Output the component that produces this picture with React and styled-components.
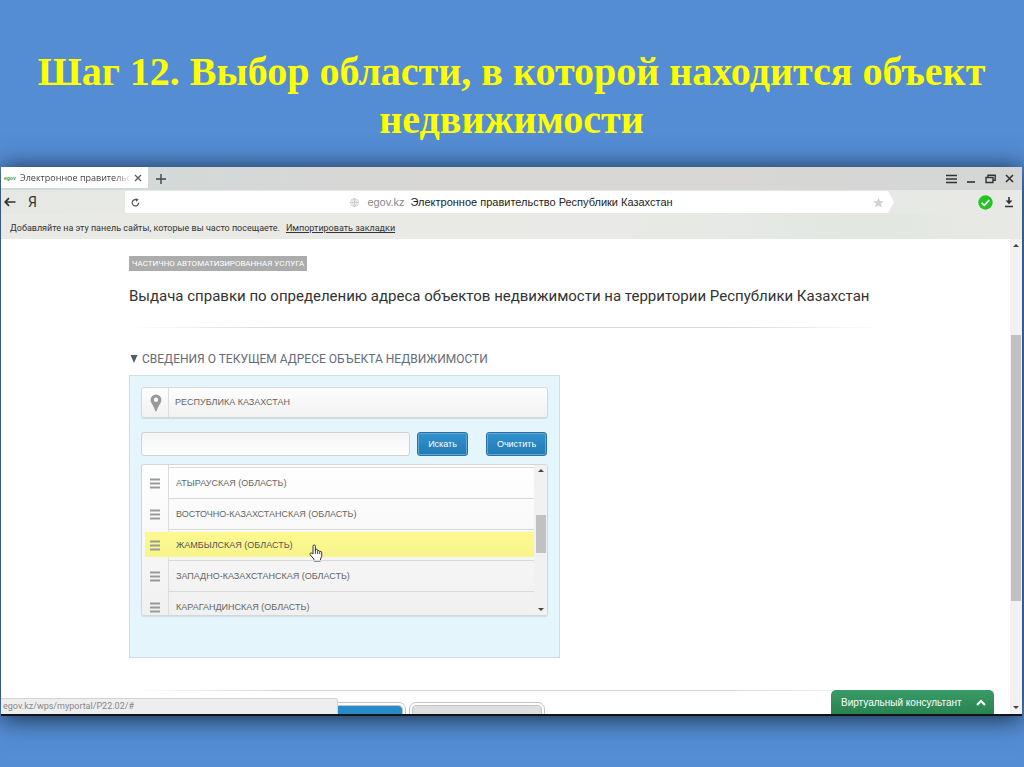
import React from "react";
import styled, { createGlobalStyle, css } from "styled-components";

const regions = [
  { name: "АТЫРАУСКАЯ (ОБЛАСТЬ)" },
  { name: "ВОСТОЧНО-КАЗАХСТАНСКАЯ (ОБЛАСТЬ)" },
  { name: "ЖАМБЫЛСКАЯ (ОБЛАСТЬ)", active: true },
  { name: "ЗАПАДНО-КАЗАХСТАНСКАЯ (ОБЛАСТЬ)" },
  { name: "КАРАГАНДИНСКАЯ (ОБЛАСТЬ)" },
];

const Scrollbar = ({ before, thumb, after, wide }) => (
  <ScrollTrack $wide={wide}>
    <ArrowUp />
    <ScrollGap $grow={before} />
    <ScrollThumb $grow={thumb} />
    <ScrollGap $grow={after} />
    <ArrowDown />
  </ScrollTrack>
);

const HandCursor = () => (
  <CursorIcon viewBox="0 0 14 18" width="14" height="18" aria-hidden="true">
    <path
      d="M4 10V2.2a1.2 1.2 0 0 1 2.4 0V7V6.2a1.1 1.1 0 0 1 2.2 0.3V7.2a1.1 1.1 0 0 1 2.1 0.4V8.2a1 1 0 0 1 2 0.4V12.5L11.5 15V17H5V15.2L1 10.6a1.2 1.2 0 0 1 1.7-1.5Z"
      fill="#fff"
      stroke="#333"
      strokeWidth="1"
      strokeLinejoin="round"
    />
    <path d="M6.4 7v3M8.6 7.2V10M10.7 8.2V10" stroke="#333" strokeWidth="0.9" />
  </CursorIcon>
);

const TabStrip = () => (
  <Tabs>
    <Tab>
      <Favicon>egov</Favicon>
      <TabTitle>Электронное правительс</TabTitle>
      <IconButton aria-label="Закрыть вкладку">
        <svg width="8" height="8" viewBox="0 0 8 8">
          <path d="M1 1l6 6M7 1L1 7" stroke="#555" strokeWidth="1.2" />
        </svg>
      </IconButton>
    </Tab>
    <IconButton aria-label="Новая вкладка">
      <svg width="10" height="10" viewBox="0 0 10 10">
        <path d="M5 0v10M0 5h10" stroke="#444" strokeWidth="1.4" />
      </svg>
    </IconButton>
    <WindowButtons>
      <IconButton aria-label="Меню">
        <svg width="11" height="10" viewBox="0 0 11 10">
          <path d="M0 1.5h11M0 5h11M0 8.5h11" stroke="#333" strokeWidth="1.5" />
        </svg>
      </IconButton>
      <IconButton aria-label="Свернуть">
        <svg width="10" height="10" viewBox="0 0 10 10">
          <path d="M1 8h8" stroke="#333" strokeWidth="1.6" />
        </svg>
      </IconButton>
      <IconButton aria-label="Развернуть">
        <svg width="11" height="10" viewBox="0 0 11 10">
          <path
            d="M1 3.5h7v5H1zM3 3.5V1.3h7.2v5H8"
            fill="none"
            stroke="#333"
            strokeWidth="1.4"
          />
        </svg>
      </IconButton>
      <IconButton aria-label="Закрыть">
        <svg width="9" height="9" viewBox="0 0 9 9">
          <path d="M1 1l7 7M8 1L1 8" stroke="#333" strokeWidth="1.6" />
        </svg>
      </IconButton>
    </WindowButtons>
  </Tabs>
);

const Toolbar = () => (
  <ToolbarRow>
    <NavButtons>
      <IconButton aria-label="Назад">
        <svg width="12" height="10" viewBox="0 0 12 10">
          <path
            d="M11.5 5H1.5M5 1.2L1.2 5L5 8.8"
            fill="none"
            stroke="#333"
            strokeWidth="1.7"
          />
        </svg>
      </IconButton>
      <YandexButton>Я</YandexButton>
    </NavButtons>
    <AddressBar>
      <IconButton aria-label="Обновить">
        <svg width="9" height="9" viewBox="0 0 9 9">
          <path
            d="M7.6 4.8A3.2 3.2 0 1 1 5.6 1.8"
            fill="none"
            stroke="#555"
            strokeWidth="1.2"
          />
          <path d="M4.6 0l3.2 1.8l-2.8 2z" fill="#555" />
        </svg>
      </IconButton>
      <Address>
        <svg width="9" height="9" viewBox="0 0 9 9">
          <path
            d="M4.5 0.5a4 4 0 1 0 0 8a4 4 0 1 0 0-8M4.5 0.5c-2.4 2.4-2.4 5.6 0 8c2.4-2.4 2.4-5.6 0-8M0.5 4.5h8M4.5 0.5v8"
            fill="none"
            stroke="#c4c4c4"
            strokeWidth="0.8"
          />
        </svg>
        <Host>egov.kz</Host>
        <span>Электронное правительство Республики Казахстан</span>
      </Address>
      <IconButton aria-label="В закладки">
        <svg width="11" height="11" viewBox="0 0 11 11">
          <path
            d="M5.5 0.5l1.5 3.5l3.8 0.3l-2.9 2.5l0.9 3.7l-3.3-2l-3.3 2l0.9-3.7l-2.9-2.5l3.8-0.3z"
            fill="#d3d3d3"
          />
        </svg>
      </IconButton>
    </AddressBar>
    <ToolbarEnd>
      <IconButton aria-label="Защита включена">
        <svg width="15" height="15" viewBox="0 0 15 15">
          <circle cx="7.5" cy="7.5" r="7.2" fill="#22c322" />
          <path
            d="M3.6 7.8l2.7 2.5l5-5.2"
            fill="none"
            stroke="#fff"
            strokeWidth="1.8"
          />
        </svg>
      </IconButton>
      <IconButton aria-label="Загрузки">
        <svg width="10" height="12" viewBox="0 0 10 12">
          <path d="M5 1v5M1 10.5h8" stroke="#333" strokeWidth="1.6" />
          <path d="M1.6 4.5h6.8L5 8.2z" fill="#333" />
        </svg>
      </IconButton>
    </ToolbarEnd>
  </ToolbarRow>
);

const RegionPicker = () => (
  <Panel>
    <CurrentRegion>
      <PinCell>
        <svg width="12" height="18" viewBox="0 0 12 18">
          <path
            d="M6 0.5a5.4 5.4 0 0 0-5.4 5.4C0.6 9.5 4.5 12 5.3 17.3h1.4C7.5 12 11.4 9.5 11.4 5.9A5.4 5.4 0 0 0 6 0.5zM6 3.5a2.2 2.2 0 1 1 0 4.4a2.2 2.2 0 1 1 0-4.4z"
            fill="#999"
            fillRule="evenodd"
          />
        </svg>
      </PinCell>
      <CurrentName>РЕСПУБЛИКА КАЗАХСТАН</CurrentName>
    </CurrentRegion>
    <SearchRow>
      <SearchInput type="text" aria-label="Поиск адреса" />
      <BlueButton>Искать</BlueButton>
      <BlueButton $last>Очистить</BlueButton>
    </SearchRow>
    <ListBox>
      <List>
        {regions.map((region) => (
          <Row key={region.name}>
            <RowButton $active={region.active}>
              <RowIcon>
                <svg width="10" height="11" viewBox="0 0 10 11">
                  <path
                    d="M0 1.5h10M0 5.5h10M0 9.5h10"
                    stroke="#999"
                    strokeWidth="1.8"
                  />
                </svg>
              </RowIcon>
              <RowName>{region.name}</RowName>
            </RowButton>
            {region.active && <HandCursor />}
          </Row>
        ))}
      </List>
      <Scrollbar before={38} thumb={38} after={50} />
    </ListBox>
  </Panel>
);

const App = () => (
  <Slide>
    <GlobalStyle />
    <Title>Шаг 12. Выбор области, в которой находится объект недвижимости</Title>
    <BrowserWindow>
      <TabStrip />
      <Toolbar />
      <BookmarksBar>
        <span>Добавляйте на эту панель сайты, которые вы часто посещаете.</span>
        <a href="#import">Импортировать закладки</a>
      </BookmarksBar>
      <Viewport>
        <Page>
          <Badge>ЧАСТИЧНО АВТОМАТИЗИРОВАННАЯ УСЛУГА</Badge>
          <ServiceName>
            Выдача справки по определению адреса объектов недвижимости на
            территории Республики Казахстан
          </ServiceName>
          <Divider />
          <SectionTitle>
            <svg width="8" height="8" viewBox="0 0 8 8">
              <path d="M0.5 0h7L4 8z" fill="#555b66" />
            </svg>
            СВЕДЕНИЯ О ТЕКУЩЕМ АДРЕСЕ ОБЪЕКТА НЕДВИЖИМОСТИ
          </SectionTitle>
          <RegionPicker />
          <Divider />
          <FormActions>
            <ActionButton $primary aria-label="Далее" />
            <ActionButton aria-label="Отмена" />
          </FormActions>
        </Page>
        <Scrollbar before={82} thumb={265} after={99} wide />
        <StatusBar>egov.kz/wps/myportal/P22.02/#</StatusBar>
        <ChatButton>
          Виртуальный консультант
          <svg width="10" height="7" viewBox="0 0 10 7">
            <path
              d="M1 6l4-4l4 4"
              fill="none"
              stroke="#fff"
              strokeWidth="2"
            />
          </svg>
        </ChatButton>
      </Viewport>
    </BrowserWindow>
  </Slide>
);

export default App;

const GlobalStyle = createGlobalStyle`
  * {
    box-sizing: border-box;
  }
  body {
    margin: 0;
  }
  button {
    font-family: inherit;
    cursor: pointer;
  }
`;

const Slide = styled.main`
  display: flex;
  flex-direction: column;
  height: 100vh;
  padding: 0 2px 51px 1px;
  background: #548dd4;
  font-family: "Liberation Sans", Arial, sans-serif;
  overflow: hidden;
`;

const Title = styled.h1`
  margin: 0;
  padding: 48px 32px 23px;
  color: #ffff00;
  font-family: "Liberation Serif", "Times New Roman", serif;
  font-size: 40px;
  line-height: 48px;
  text-align: center;
`;

const BrowserWindow = styled.section`
  display: flex;
  flex: 1;
  flex-direction: column;
  min-height: 0;
  border-bottom: 2px solid #10151c;
  background: #fff;
  box-shadow: 0 2px 24px rgba(0, 0, 0, 0.75);
`;

const IconButton = styled.button`
  display: flex;
  align-items: center;
  justify-content: center;
  padding: 0;
  border: 0;
  background: none;
`;

const Tabs = styled.div`
  display: flex;
  flex: none;
  align-items: center;
  gap: 8px;
  height: 23px;
  background: linear-gradient(to right, #cfdcda, #d7d7d7 30%, #d9d7d5 60%, #d3d6d5);
`;

const Tab = styled.div`
  display: flex;
  align-self: flex-start;
  align-items: center;
  gap: 3px;
  width: 147px;
  height: 21px;
  padding: 0 6px 0 3px;
  background: #fff;
`;

const Favicon = styled.span`
  width: 13px;
  color: #2b9a4b;
  font-size: 5px;
  font-weight: bold;
`;

const TabTitle = styled.span`
  flex: 1;
  overflow: hidden;
  color: #444;
  font-family: "Open Sans", sans-serif;
  font-size: 9px;
  white-space: nowrap;
  mask-image: linear-gradient(to right, #000 85%, transparent);
`;

const WindowButtons = styled.div`
  display: flex;
  align-items: center;
  gap: 9px;
  margin-left: auto;
  padding-right: 8px;
`;

const ToolbarRow = styled.div`
  display: flex;
  flex: none;
  align-items: center;
  height: 24px;
  background: linear-gradient(to right, #e6e8e3, #e9eae7 30%, #e4e8e4 80%, #e9e9e6);
`;

const NavButtons = styled.div`
  display: flex;
  align-items: center;
  gap: 12px;
  width: 124px;
  padding-left: 3px;
`;

const YandexButton = styled(IconButton)`
  color: #333;
  font-family: Roboto, sans-serif;
  font-size: 14px;
  line-height: 20px;
`;

const AddressBar = styled.div`
  display: flex;
  flex: 1;
  align-items: center;
  height: 22px;
  padding: 0 10px 0 6px;
  background: #fff;
  clip-path: polygon(0 0, calc(100% - 6px) 0, 100% 50%, calc(100% - 6px) 100%, 0 100%);
`;

const Address = styled.div`
  display: flex;
  flex: 1;
  align-items: center;
  justify-content: center;
  gap: 6px;
  padding-left: 10px;
  color: #222;
  font-size: 11px;
`;

const Host = styled.span`
  padding-left: 2px;
  color: #888;
`;

const ToolbarEnd = styled.div`
  display: flex;
  align-items: center;
  justify-content: flex-end;
  gap: 11px;
  width: 128px;
  padding-right: 8px;
`;

const BookmarksBar = styled.div`
  display: flex;
  flex: none;
  align-items: center;
  gap: 6px;
  height: 25px;
  padding: 3px 9px 0;
  background: linear-gradient(to right, #e9eae6, #e9eae7 60%, #e2e7e2 85%, #e8e9e5);
  color: #333;
  font-family: Roboto, sans-serif;
  font-size: 9px;

  a {
    color: #333;
  }
`;

const Viewport = styled.div`
  position: relative;
  display: flex;
  flex: 1;
  min-height: 0;
  overflow: hidden;
`;

const Page = styled.div`
  flex: 1;
  min-width: 0;
  padding: 17px 128px 0;
`;

const Badge = styled.div`
  width: fit-content;
  padding: 0 3px;
  background: #acacac;
  color: #fff;
  font-family: Roboto, sans-serif;
  font-size: 8px;
  line-height: 15px;
`;

const ServiceName = styled.h2`
  margin: 15px 0 21px;
  color: #333;
  font-family: Roboto, sans-serif;
  font-size: 15px;
  font-weight: normal;
  line-height: 20px;
  white-space: nowrap;
`;

const Divider = styled.hr`
  height: 1px;
  margin: 0;
  border: 0;
  background: linear-gradient(to right, transparent, #d8d8d8 20%, #d8d8d8 80%, transparent);
`;

const SectionTitle = styled.h3`
  display: flex;
  align-items: center;
  gap: 4px;
  margin: 21px 0 6px;
  padding-left: 1px;
  color: #666c78;
  font-family: Roboto, sans-serif;
  font-size: 12px;
  font-weight: normal;
  line-height: 20px;
`;

const Panel = styled.div`
  width: 431px;
  height: 283px;
  margin-bottom: 32px;
  padding: 11px;
  border: 1px solid #ccdfe8;
  background: #e4f6fb;
`;

const CurrentRegion = styled.div`
  display: flex;
  height: 31px;
  border: 1px solid #d3dadc;
  border-radius: 3px;
  background: linear-gradient(#fefefe, #f1f1f1);
  box-shadow: 0 1px 1px rgba(0, 0, 0, 0.1);
`;

const PinCell = styled.div`
  display: flex;
  align-items: center;
  justify-content: center;
  width: 27px;
  padding-left: 2px;
  border-right: 1px solid #ddd;
`;

const CurrentName = styled.span`
  padding-left: 6px;
  color: #666;
  font-size: 9px;
  line-height: 29px;
`;

const SearchRow = styled.div`
  display: flex;
  align-items: center;
  margin: 14px 0 8px;
`;

const SearchInput = styled.input`
  flex: 1;
  min-width: 0;
  height: 24px;
  margin-right: 7px;
  border: 1px solid #ccd4d7;
  border-radius: 3px;
  background: linear-gradient(#f4f4f4, #fff);
`;

const BlueButton = styled.button`
  width: ${({ $last }) => ($last ? "61px" : "51px")};
  height: 24px;
  margin-left: ${({ $last }) => ($last ? "18px" : "0")};
  margin-right: ${({ $last }) => ($last ? "1px" : "0")};
  padding: 0;
  border: 1px solid #2f6f9f;
  border-radius: 3px;
  background: linear-gradient(#3293cf, #2079b4);
  box-shadow: inset 0 0 0 1px #62a9d6;
  color: #fff;
  font-size: 9px;
`;

const ListBox = styled.div`
  display: flex;
  height: 152px;
  border: 1px solid #d0d8db;
  border-radius: 3px;
  background: linear-gradient(#fff, #f0f0f0);
  box-shadow: 0 1px 1px rgba(0, 0, 0, 0.1);
  overflow: hidden;
`;

const List = styled.ul`
  flex: 1;
  margin: 0;
  padding: 2px 0 0;
  background: linear-gradient(#ddd, #ddd) 26px 0 / 1px 100% no-repeat;
  list-style: none;
`;

const Row = styled.li`
  position: relative;
  height: 31px;
  padding: 3px 0 3px 3px;
  background: linear-gradient(#d9d9d9, #d9d9d9) 27px 0 / 100% 1px no-repeat;
`;

const RowButton = styled.button`
  display: flex;
  align-items: center;
  width: 100%;
  height: 25px;
  padding: 0;
  border: 0;
  background: none;
  color: #666;
  font-size: 9px;
  ${({ $active }) =>
    $active &&
    css`
      background: linear-gradient(#fdf98f, #f6f48b);
      color: #555;
    `}
`;

const RowIcon = styled.span`
  display: flex;
  justify-content: center;
  width: 23px;
  padding: 2px 3px 0 0;
`;

const RowName = styled.span`
  padding-left: 8px;
`;

const CursorIcon = styled.svg`
  position: absolute;
  top: 15px;
  left: 167px;
`;

const ScrollTrack = styled.div`
  display: flex;
  flex: none;
  flex-direction: column;
  align-items: center;
  width: ${({ $wide }) => ($wide ? "12px" : "13px")};
  padding: ${({ $wide }) => ($wide ? "5px 0" : "4px 1px")};
  background: #f1f1f1;
`;

const ArrowUp = styled.span`
  width: 6px;
  margin-bottom: 6px;
  border: 3px solid transparent;
  border-top: 0;
  border-bottom-color: #444;
`;

const ArrowDown = styled.span`
  width: 6px;
  margin-top: 6px;
  border: 3px solid transparent;
  border-bottom: 0;
  border-top-color: #444;
`;

const ScrollGap = styled.span`
  flex: ${({ $grow }) => $grow} 0 0;
`;

const ScrollThumb = styled.span`
  flex: ${({ $grow }) => $grow} 0 0;
  width: 10px;
  background: #c1c1c1;
`;

const FormActions = styled.div`
  display: flex;
  gap: 3px;
  margin: 11px 0 0 141px;
`;

const ActionButton = styled.button`
  width: 136px;
  height: 32px;
  border: 4px double #c4c4c4;
  border-radius: 7px;
  background: ${({ $primary }) => ($primary ? "#2a8bcb" : "#dedede")};
  background-clip: padding-box;
`;

const StatusBar = styled.div`
  position: absolute;
  bottom: 0;
  left: 0;
  width: 337px;
  height: 16px;
  padding-left: 2px;
  border: 1px solid #d4d4d4;
  border-width: 1px 1px 0 0;
  border-radius: 0 3px 0 0;
  background: #eeeeee;
  color: #888;
  font-family: Roboto, sans-serif;
  font-size: 9px;
  line-height: 15px;
`;

const ChatButton = styled.button`
  position: absolute;
  right: 28px;
  bottom: 0;
  display: flex;
  align-items: center;
  justify-content: space-between;
  width: 163px;
  height: 24px;
  padding: 0 8px 0 10px;
  border: 0;
  border-radius: 5px 5px 0 0;
  background: linear-gradient(#3a9b68, #28834f);
  color: #fff;
  font-size: 10px;
`;
